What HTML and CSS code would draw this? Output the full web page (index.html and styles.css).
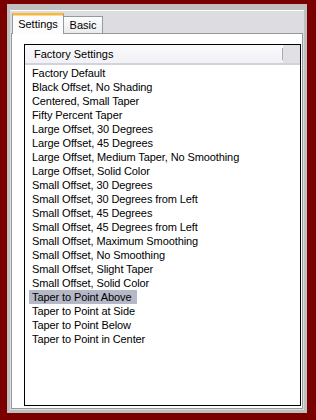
FILE: index.html
```html
<!DOCTYPE html>
<html>

<head>
    <title>Presets</title>
    <link rel="stylesheet" href="styles.css">
</head>

<body>
    <div class="frame">
        <div class="dialog">
            <div class="tabs">
                <div class="tab active">Settings</div>
                <div class="tab">Basic</div>
            </div>
            <div class="page">
                <div class="listbox">
                    <div class="list-header">
                        <div class="col">Factory Settings</div>
                        <div class="col-rest"></div>
                    </div>
                    <ul class="items">
                        <li><span>Factory Default</span></li>
                        <li><span>Black Offset, No Shading</span></li>
                        <li><span>Centered, Small Taper</span></li>
                        <li><span>Fifty Percent Taper</span></li>
                        <li><span>Large Offset, 30 Degrees</span></li>
                        <li><span>Large Offset, 45 Degrees</span></li>
                        <li><span>Large Offset, Medium Taper, No Smoothing</span></li>
                        <li><span>Large Offset, Solid Color</span></li>
                        <li><span>Small Offset, 30 Degrees</span></li>
                        <li><span>Small Offset, 30 Degrees from Left</span></li>
                        <li><span>Small Offset, 45 Degrees</span></li>
                        <li><span>Small Offset, 45 Degrees from Left</span></li>
                        <li><span>Small Offset, Maximum Smoothing</span></li>
                        <li><span>Small Offset, No Smoothing</span></li>
                        <li><span>Small Offset, Slight Taper</span></li>
                        <li><span>Small Offset, Solid Color</span></li>
                        <li class="selected"><span>Taper to Point Above</span></li>
                        <li><span>Taper to Point at Side</span></li>
                        <li><span>Taper to Point Below</span></li>
                        <li><span>Taper to Point in Center</span></li>
                    </ul>
                </div>
            </div>
        </div>
    </div>
</body>

</html>
```

FILE: styles.css
```css
html,
body {
    margin: 0;
    height: 100%;
}

body {
    background-color: #7a0000;
    font-family: "Liberation Sans", Arial, sans-serif;
    font-size: 11px;
    color: #000;
    padding: 4px 9px 7px 7px;
    box-sizing: border-box;
}

.frame {
    height: 100%;
    background-color: #c0c0c0;
    padding: 6px 3px 3px 3px;
    box-sizing: border-box;
}

.dialog {
    height: 100%;
    display: flex;
    flex-direction: column;
    background-color: #dddce1;
    border-top: 1px solid #fff;
    box-sizing: border-box;
}

.tabs {
    height: 22px;
    display: flex;
    align-items: flex-end;
    padding-left: 2px;
}

.tab {
    width: 38px;
    height: 16px;
    line-height: 16px;
    text-align: center;
    background: linear-gradient(#fdfdfd, #ebebef);
    border: 1px solid #919b9c;
    border-bottom: none;
    border-left: none;
}

.tab.active {
    position: relative;
    z-index: 1;
    width: 50px;
    height: 19px;
    line-height: 19px;
    margin-bottom: -1px;
    background: #fcfcfe;
    border-left: 1px solid #919b9c;
    border-top: 2px solid #f5b840;
    box-shadow: inset 0 1px 0 #fcd98b;
}

.page {
    flex: 1;
    background-color: #fff;
    border: 1px solid #919b9c;
    margin: 0 1px 1px 1px;
    padding: 10px 1px 2px 12px;
    box-sizing: border-box;
    min-height: 0;
}

.listbox {
    height: 100%;
    border: 1px solid #000;
    box-sizing: border-box;
    background-color: #fff;
    overflow: hidden;
}

.list-header {
    display: flex;
    height: 18px;
    border-bottom: 2px solid #d2d2dc;
    background: linear-gradient(#fafafc, #f2f2f6);
}

.col {
    width: 248px;
    padding-left: 9px;
    border-right: 1px solid #a9a9b2;
    margin: 3px 0;
    line-height: 12px;
}

.col-rest {
    flex: 1;
    background: #e1e1e5;
}

.items {
    list-style: none;
    margin: 0;
    padding: 1px 0 0 4px;
    letter-spacing: -0.1px;
}

.items li {
    height: 14px;
    line-height: 14px;
}

.items span {
    display: inline-block;
    padding: 0 5px 0 3px;
}

.items .selected span {
    background-color: #b5b8c7;
}
```
